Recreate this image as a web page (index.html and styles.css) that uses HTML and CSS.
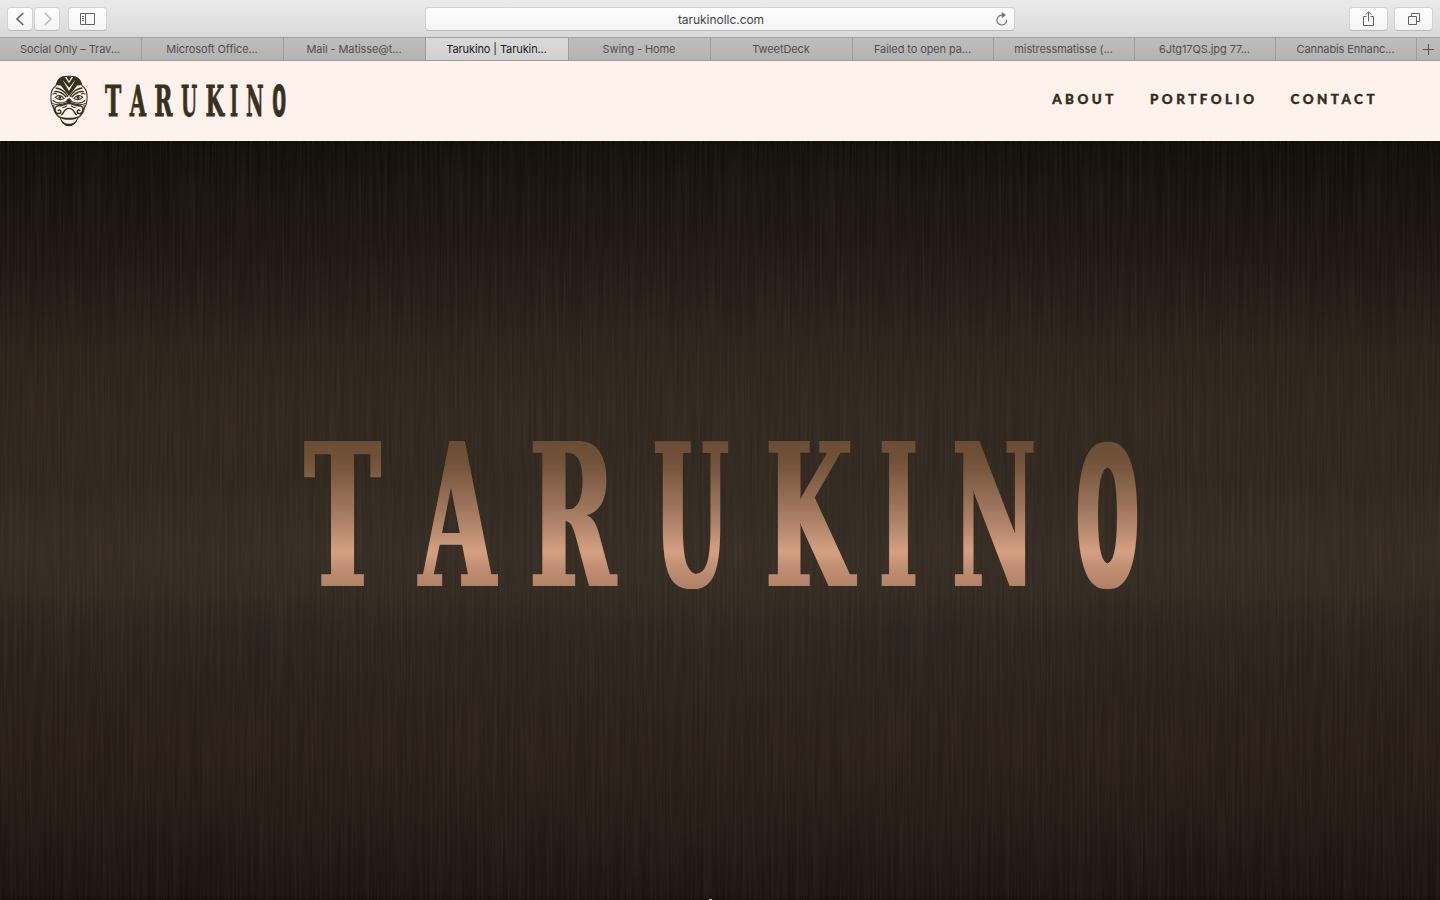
FILE: index.html
```html
<!DOCTYPE html>
<html lang="en">
<head>
<meta charset="utf-8">
<title>Tarukino | Tarukino</title>
<link rel="stylesheet" href="styles.css">
</head>
<body>
<div class="toolbar">
  <div class="tools">
    <div class="pair">
      <button class="btn back"><svg width="25" height="22" viewBox="0 0 25 22"><path d="M15.300 5 9 11l6.300 6"/></svg></button>
      <button class="btn fwd"><svg width="25" height="22" viewBox="0 0 25 22"><path d="M9.700 5 16 11l-6.300 6"/></svg></button>
    </div>
    <button class="btn wide"><svg width="37" height="22" viewBox="0 0 37 22"><path class="thin" d="M11.500 5.500h14v11h-14zM16.500 5.500v11M13 8.500h2M13 10.500h2M13 12.500h2"/></svg></button>
  </div>
  <div class="address"><span>tarukinollc.com</span><svg class="reload" width="14" height="15" viewBox="0 0 14 15"><path d="M8.500 3.200H6.600A4.900 4.900 0 1 0 11.700 7.700"/><path class="tip" d="M6.700 0v6.200l4.300-3.100z"/></svg></div>
  <div class="tools right">
    <button class="btn wide"><svg width="37" height="22" viewBox="0 0 37 22"><path class="thin" d="M16.500 8.500h-3v9h10v-9h-3M18.500 13.500V4M15.700 6.600l2.800-2.800 2.800 2.800"/></svg></button>
    <button class="btn wide"><svg width="37" height="22" viewBox="0 0 37 22"><path class="thin" d="M13.500 8.500h8v8h-8zM16.500 8V5.500h8v8H22"/></svg></button>
  </div>
</div>
<div class="tabs">
  <div class="tab">Social Only – Trav...</div>
  <div class="tab">Microsoft Office...</div>
  <div class="tab">Mail - Matisse@t...</div>
  <div class="tab active">Tarukino | Tarukin...</div>
  <div class="tab">Swing - Home</div>
  <div class="tab">TweetDeck</div>
  <div class="tab">Failed to open pa...</div>
  <div class="tab">mistressmatisse (...</div>
  <div class="tab">6Jtg17QS.jpg 77...</div>
  <div class="tab">Cannabis Enhanc...</div>
  <div class="plus"><svg width="11" height="11" viewBox="0 0 11 11"><path d="M5.500 0v11M0 5.500h11"/></svg></div>
</div>
<header class="site-header">
  <a class="brand">
    <svg class="mask" viewBox="28 28 116 157">
      <defs>
        <g id="half">
          <path class="line" d="M86 31C62 30 49 42 46 60 35 67 30 84 31 99c0 12 4 24 10 31 2 14 9 23 18 28 6 17 17 24 27 24"/>
          <path class="solid" d="M86 52 72 31C58 33 49 43 47 58l14 1 25 32V76L66 42l20 24zM86 31h-9l9 15z"/>
          <path class="line heavy" d="M45 67c14 1 28 10 38 26M41 78c14-3 26 4 37 17"/>
          <path class="line" d="M36 86c5-3 8-3 13-1M36 104c12 13 32 10 44 3M34 113c14 8 32 5 45-1"/>
          <path class="line" d="M44 95c8-9 20-6 27 4-9 5-20 3-27-4z"/>
          <circle class="solid" cx="58" cy="96" r="4.500"/>
          <path class="line heavy" d="M86 114c-12 0-18 8-30 7-10-1-15 7-12 16 3 9 15 11 17 3 1-7-7-8-9-3M62 149c9-3 6-19 24-20"/>
          <path class="line" d="M40 118c-3 12 2 24 13 33M80 121c-4 3-8 5-14 6"/>
          <path class="solid" d="M86 98c-4 0-8 5-9 12l9 5zM54 151c10 6 20 7 32 7v6c-12 0-24 0-32-13zM63 163c6 10 12 13 23 13v7c-11 0-20-7-23-20z"/>
        </g>
      </defs>
      <use href="#half"/><use href="#half" transform="translate(172 0) scale(-1 1)"/>
    </svg>
    <svg class="wordmark small" viewBox="300 436 842 156">
      <text y="585"><tspan x="305" textLength="75" lengthAdjust="spacingAndGlyphs">T</tspan><tspan x="419" textLength="75" lengthAdjust="spacingAndGlyphs">A</tspan><tspan x="531" textLength="84" lengthAdjust="spacingAndGlyphs">R</tspan><tspan x="654" textLength="74" lengthAdjust="spacingAndGlyphs">U</tspan><tspan x="767" textLength="86" lengthAdjust="spacingAndGlyphs">K</tspan><tspan x="880" textLength="37" lengthAdjust="spacingAndGlyphs">I</tspan><tspan x="953" textLength="81" lengthAdjust="spacingAndGlyphs">N</tspan><tspan class="round" x="1073" textLength="66" lengthAdjust="spacingAndGlyphs">O</tspan></text>
    </svg>
  </a>
  <nav class="nav"><a>ABOUT</a><a>PORTFOLIO</a><a>CONTACT</a></nav>
</header>
<main class="hero">
  <svg class="grain" width="1440" height="759">
    <filter id="brushed" x="0" y="0" width="100%" height="100%" color-interpolation-filters="sRGB">
      <feTurbulence type="fractalNoise" baseFrequency="0.4 0.009" numOctaves="2" seed="4"/>
      <feColorMatrix values="0 0 0 0 0.43  0 0 0 0 0.36  0 0 0 0 0.29  0.26 0 0 0 -0.09"/>
    </filter>
    <rect width="1440" height="759" filter="url(#brushed)"/>
  </svg>
  <svg class="wordmark large" viewBox="300 436 842 156">
    <defs>
      <linearGradient id="copper" gradientUnits="userSpaceOnUse" x1="0" y1="440" x2="0" y2="587">
        <stop offset="0" stop-color="#694d34"/><stop offset=".15" stop-color="#725239"/><stop offset=".45" stop-color="#9c745b"/><stop offset=".62" stop-color="#b98a70"/><stop offset=".76" stop-color="#d5a081"/><stop offset=".86" stop-color="#c18f74"/><stop offset="1" stop-color="#b08165"/>
      </linearGradient>
      <filter id="widen" filterUnits="userSpaceOnUse" x="295" y="430" width="855" height="170" color-interpolation-filters="sRGB"><feMorphology operator="dilate" radius="2 0"/></filter>
    </defs>
    <text y="586" filter="url(#widen)"><tspan x="305" textLength="75" lengthAdjust="spacingAndGlyphs">T</tspan><tspan x="420" textLength="75" lengthAdjust="spacingAndGlyphs">A</tspan><tspan x="530" textLength="85" lengthAdjust="spacingAndGlyphs">R</tspan><tspan x="654" textLength="74" lengthAdjust="spacingAndGlyphs">U</tspan><tspan x="766" textLength="86" lengthAdjust="spacingAndGlyphs">K</tspan><tspan x="880" textLength="37" lengthAdjust="spacingAndGlyphs">I</tspan><tspan x="953" textLength="82" lengthAdjust="spacingAndGlyphs">N</tspan><tspan class="round" x="1075" textLength="65" lengthAdjust="spacingAndGlyphs">O</tspan></text>
  </svg>
  <i class="dot"></i>
</main>
</body>
</html>
```
FILE: styles.css
```css
* { box-sizing: border-box; }
body { margin: 0; width: 1440px; height: 900px; overflow: hidden; font-family: Inter, "Liberation Sans", sans-serif; background: #1f1612; }
svg { display: block; fill: none; }
.toolbar { height: 37px; display: grid; grid-template-columns: 1fr 590px 1fr; align-items: start; padding: 7px 7px 0; background: linear-gradient(#ebebeb, #d9d9d9); }
.tools { display: flex; gap: 8px; }
.tools.right { justify-content: flex-end; gap: 6px; }
.pair { display: flex; gap: 1px; }
.btn { width: 26px; height: 24px; padding: 0; border: 1px solid #d2d2d2; border-bottom-color: #b9b9b9; border-radius: 4px; background: linear-gradient(#fff, #f3f3f3); display: flex; justify-content: center; align-items: center; }
.btn.wide { width: 39px; }
.btn svg { stroke: #626262; stroke-width: 1.6; flex: none; }
.btn.fwd svg { stroke: #bcbcbc; }
.btn svg .thin { stroke-width: 1; }
.address { height: 24px; border: 1px solid #d2d2d2; border-bottom-color: #b9b9b9; border-radius: 4px; background: linear-gradient(#fff, #f3f3f3); display: grid; grid-template-columns: 1fr auto 1fr; align-items: center; font-size: 12px; color: #444; }
.address span { grid-column: 2; letter-spacing: -.04px; padding-left: 2px; }
.reload { justify-self: end; margin-right: 5px; stroke: #777; stroke-width: 1.2; }
.reload .tip { fill: #777; stroke: none; }
.tabs { height: 24px; display: grid; grid-template-columns: 142px 142px 142px 143px 142px 142px 141px 141px 141px 141px 23px; border-top: 1px solid #a0a0a0; border-bottom: 1px solid #9b9b9b; background: linear-gradient(#bebebe, #b3b3b3); font-size: 11px; letter-spacing: -.1px; color: #505050; }
.tab { border-right: 1px solid #9d9d9d; padding-right: 1px; text-align: center; line-height: 23px; white-space: nowrap; overflow: hidden; }
.tab.active { background: linear-gradient(#dadada, #d0d0d0); color: #1a1a1a; }
.plus { display: flex; align-items: center; justify-content: center; }
.plus svg { stroke: #555; }
.site-header { height: 80px; background: #fef2ec; display: flex; align-items: center; justify-content: space-between; padding: 0 62px 0 50px; }
.brand { display: flex; align-items: center; gap: 16px; }
.mask { width: 38px; height: 52px; }
.mask .line { stroke: #383120; stroke-width: 3.2; }
.mask .heavy { stroke-width: 4.5; }
.mask .solid { fill: #383120; }
.wordmark { font: bold 199px "DejaVu Serif", serif; overflow: visible; }
.wordmark .round { font-family: "DejaVu Sans Mono", monospace; font-size: 194px; }
.small { width: 183px; height: 34px; fill: #383120; }
.small text { stroke: #383120; stroke-width: 4; }
.nav { display: flex; gap: 33px; font: 900 13.4px Lato, sans-serif; letter-spacing: 3.5px; color: #332c1c; padding-bottom: 4px; -webkit-text-stroke: .4px #332c1c; }
.hero { position: relative; height: 759px; padding: 295px 0 0 300px; background: radial-gradient(ellipse 50% 80% at 50% 50%, rgba(62, 54, 48, .16), transparent), linear-gradient(#0f0d08 0, #17110c 40px, #1b130f 80px, #1f1612 115px, #251c17 165px, #2b231b 215px, #2f261d 270px, #2f271e 340px, #352c24 410px, #322a21 450px, #2b231d 490px, #29201a 540px, #281e18 610px, #231a15 680px, #1c120f 754px, #140c09 759px); }
.grain { position: absolute; left: 0; top: 0; }
.large { position: relative; width: 842px; height: 156px; fill: url(#copper); }
.dot { position: absolute; left: 709px; bottom: 0; width: 3px; height: 1px; background: #bdb5ae; }
```
